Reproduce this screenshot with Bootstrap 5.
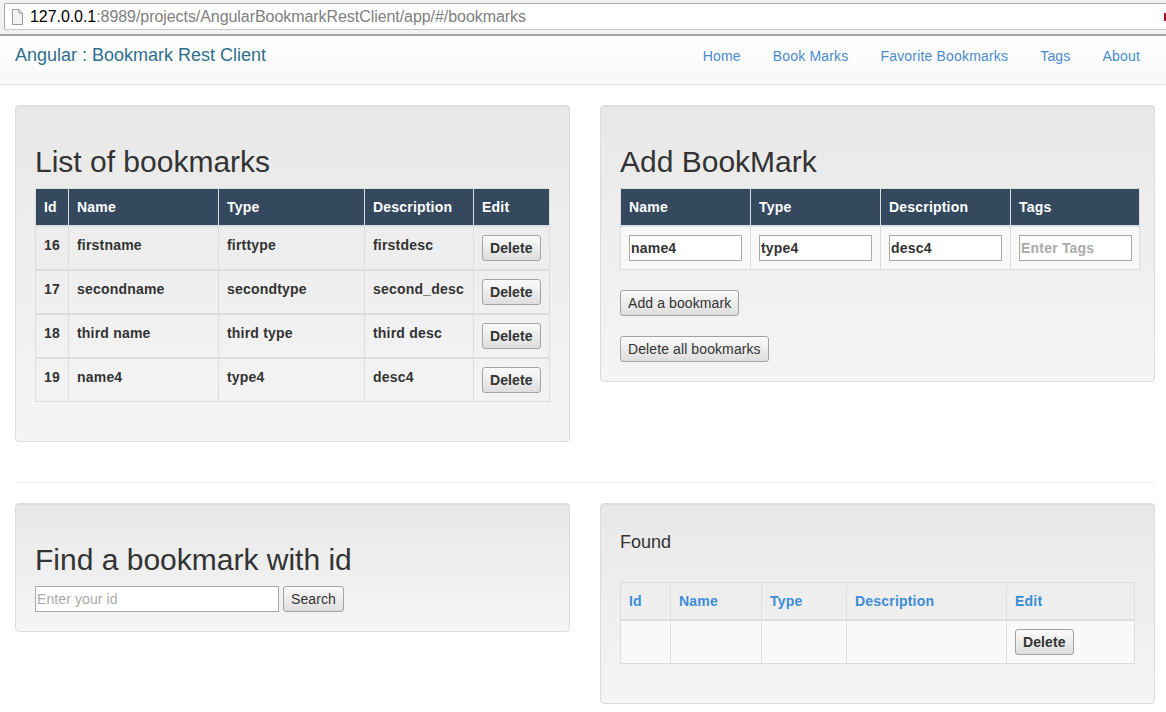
<!DOCTYPE html>
<html lang="en">
<head>
<meta charset="utf-8">
<title>Angular : Bookmark Rest Client</title>
<link href="https://cdn.jsdelivr.net/npm/bootstrap@5.3.0/dist/css/bootstrap.min.css" rel="stylesheet">
<style>
html,body{overflow:hidden;height:712px}
body{font-family:"Liberation Sans",Arial,sans-serif;font-size:14px;line-height:20px;color:#333;background:#fff}
.addr-chrome{height:36px;background:#f2f2f2;padding:3px 0 0;border-bottom:2px solid #a8a8a8;border-top:0}
.addr-field{height:27px;margin-left:4px;background:#fff;border:1px solid #a9a9a9;border-right:0;border-bottom-color:#c8c8c8;border-radius:2px 0 0 2px;padding-left:7px;gap:7px;font-size:16px;letter-spacing:-.06px;line-height:25px;color:#808080;white-space:nowrap}
.addr-host{color:#000}
.addr-mark{width:2px;height:8px;background:#a01020;margin-left:auto}
.app-bar{height:49px;background:linear-gradient(#fff,#f8f8f8);border-bottom:1px solid #e7e7e7;box-shadow:0 1px 2px rgba(0,0,0,.05);padding:0 26px 9px 15px}
.app-brand{font-size:18px;line-height:20px;color:#2f6f8d;text-decoration:none;margin-top:-2px}
.app-links{gap:32px;letter-spacing:.18px}
.app-links a{color:#4a8bcc;text-decoration:none}
.shell{width:1170px;padding:20px 15px 0}
.shell .row{--bs-gutter-x:30px}
.pane{background:linear-gradient(#e8e8e8,#f5f5f5);border:1px solid #dcdcdc;border-radius:4px;padding:19px;margin-bottom:20px;box-shadow:inset 0 1px 1px rgba(0,0,0,.05)}
.pane-title{font-size:30px;line-height:33px;font-weight:500;margin:20px 0 10px;color:#333}
.pane-sub{font-size:18px;line-height:20px;font-weight:400;margin:9px 0 30px;color:#333}
.divider{margin:20px 0;border:0;border-top:1px solid #eee;opacity:1;width:1140px}
.grid-table{--bs-table-bg:transparent;--bs-table-color:#333;--bs-table-border-color:#ddd;margin-bottom:20px;table-layout:fixed;border-color:#ddd;font-weight:700;width:514px;letter-spacing:.2px}
.grid-table>:not(caption)>*>*{padding:8px;border-width:1px;line-height:20px;box-shadow:none;vertical-align:top}
.grid-table thead th{border-bottom-width:2px}
.grid-table tbody+tbody{border-top:2px solid #ddd}
.grid-table.head-dark thead th{background:#34495e;color:#fff;border-color:#ddd}
.grid-table.head-link thead th{color:#3c8dd5}
.grid-table .cell-light{background:#f9f9f9}
.grid-table.table-wide{width:519px}
.w33{width:33px}.w50{width:50px}.w91{width:91px}.w85{width:85px}.w160{width:160px}.w128{width:128px}
.w150{width:150px}.w146{width:146px}.w109{width:109px}.w76{width:76px}.w130{width:130px}.w129{width:129px}
.act-btn{height:26px;padding:0 7px;line-height:24px;font-size:14px;color:#333;background:linear-gradient(#fafafa,#dedede);border:1px solid #a3a3a3;border-radius:3px;letter-spacing:.1px}
.act-btn.strong{font-weight:700;letter-spacing:.1px}
.cell-input{width:113px;height:26px;border:1px solid #a9a9a9;padding:0 1px;font:700 14px "Liberation Sans",Arial,sans-serif;letter-spacing:.2px;color:#333;background:#fff;display:block;border-radius:0}
.cell-input::placeholder,.id-input::placeholder{color:#aaa;opacity:1}
.id-input{width:244px;height:26px;border:1px solid #a9a9a9;padding:0 1px;font:14px "Liberation Sans",Arial,sans-serif;letter-spacing:.1px;color:#333;background:#fff;border-radius:0}
.btn-stack{gap:20px;margin-top:1px}
</style>
</head>
<body>
<div class="addr-chrome">
  <div class="addr-field d-flex align-items-center">
    <svg width="11" height="16" viewBox="0 0 11 16" aria-hidden="true"><path d="M.5.5h6.500l3.500 3.500v11.500h-10z" fill="#f4f4f4" stroke="#9a9a9a"/><path d="M7 .5v3.500h3.500" fill="#e2e2e2" stroke="#9a9a9a"/></svg>
    <span><span class="addr-host">127.0.0.1</span>:8989/projects/AngularBookmarkRestClient/app/#/bookmarks</span>
    <span class="addr-mark"></span>
  </div>
</div>
<nav class="app-bar d-flex justify-content-between align-items-center">
  <a class="app-brand" href="#">Angular : Bookmark Rest Client</a>
  <div class="app-links d-flex">
    <a href="#">Home</a><a href="#">Book Marks</a><a href="#">Favorite Bookmarks</a><a href="#">Tags</a><a href="#">About</a>
  </div>
</nav>
<main class="shell">
  <div class="row">
    <div class="col-6">
      <section class="pane">
        <h2 class="pane-title">List of bookmarks</h2>
        <table class="table table-bordered grid-table head-dark">
          <thead><tr><th class="w33">Id</th><th class="w150">Name</th><th class="w146">Type</th><th class="w109">Description</th><th class="w76">Edit</th></tr></thead>
          <tbody><tr><td>16</td><td>firstname</td><td>firttype</td><td>firstdesc</td><td><button class="act-btn strong">Delete</button></td></tr></tbody>
          <tbody><tr><td>17</td><td>secondname</td><td>secondtype</td><td>second_desc</td><td><button class="act-btn strong">Delete</button></td></tr></tbody>
          <tbody><tr><td>18</td><td>third name</td><td>third type</td><td>third desc</td><td><button class="act-btn strong">Delete</button></td></tr></tbody>
          <tbody><tr><td>19</td><td>name4</td><td>type4</td><td>desc4</td><td><button class="act-btn strong">Delete</button></td></tr></tbody>
        </table>
      </section>
    </div>
    <div class="col-6">
      <section class="pane">
        <h2 class="pane-title">Add BookMark</h2>
        <table class="table table-bordered grid-table head-dark table-wide">
          <thead><tr><th class="w130">Name</th><th class="w130">Type</th><th class="w130">Description</th><th class="w129">Tags</th></tr></thead>
          <tbody><tr>
            <td class="cell-light"><input class="cell-input" value="name4"></td>
            <td class="cell-light"><input class="cell-input" value="type4"></td>
            <td class="cell-light"><input class="cell-input" value="desc4"></td>
            <td class="cell-light"><input class="cell-input" placeholder="Enter Tags"></td>
          </tr></tbody>
        </table>
        <div class="d-flex flex-column align-items-start btn-stack">
          <button class="act-btn">Add a bookmark</button>
          <button class="act-btn">Delete all bookmarks</button>
        </div>
      </section>
    </div>
  </div>
  <hr class="divider">
  <div class="row">
    <div class="col-6">
      <section class="pane">
        <h2 class="pane-title">Find a bookmark with id</h2>
        <div class="d-flex gap-1">
          <input class="id-input" placeholder="Enter your id">
          <button class="act-btn">Search</button>
        </div>
      </section>
    </div>
    <div class="col-6">
      <section class="pane">
        <h4 class="pane-sub">Found</h4>
        <table class="table table-bordered grid-table head-link">
          <thead><tr><th class="w50">Id</th><th class="w91">Name</th><th class="w85">Type</th><th class="w160">Description</th><th class="w128">Edit</th></tr></thead>
          <tbody><tr><td class="cell-light"></td><td class="cell-light"></td><td class="cell-light"></td><td class="cell-light"></td><td class="cell-light"><button class="act-btn strong">Delete</button></td></tr></tbody>
        </table>
      </section>
    </div>
  </div>
</main>
<script src="https://cdn.jsdelivr.net/npm/bootstrap@5.3.0/dist/js/bootstrap.bundle.min.js"></script>
</body>
</html>
